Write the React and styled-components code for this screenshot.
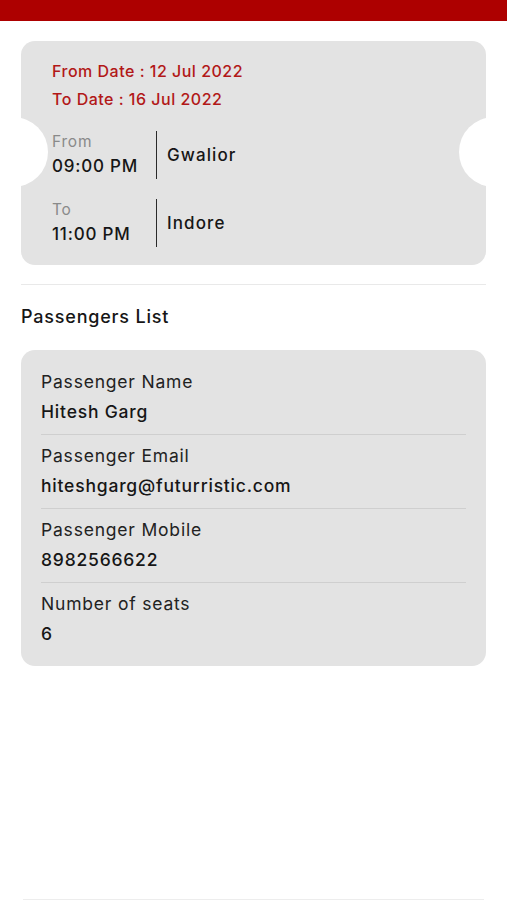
import React from 'react';
import styled, { createGlobalStyle } from 'styled-components';

const GlobalStyle = createGlobalStyle`
    * {
        box-sizing: border-box;
    }
    body {
        margin: 0;
        background: #fff;
        font-family: Inter, "Noto Sans", sans-serif;
        color: #161616;
        letter-spacing: 0.8px;
    }
`;

const trip = {
    fromDate: '12 Jul 2022',
    toDate: '16 Jul 2022',
    stops: [
        { label: 'From', time: '09:00 PM', city: 'Gwalior' },
        { label: 'To', time: '11:00 PM', city: 'Indore' },
    ],
};

const passenger = [
    { label: 'Passenger Name', value: 'Hitesh Garg' },
    { label: 'Passenger Email', value: 'hiteshgarg@futurristic.com' },
    { label: 'Passenger Mobile', value: '8982566622' },
    { label: 'Number of seats', value: '6' },
];

class App extends React.Component {
    render() {
        return (
            <Page>
                <GlobalStyle />
                <TopBar />
                <Main>
                    <Ticket>
                        <DateLine>From Date : {trip.fromDate}</DateLine>
                        <DateLine>To Date : {trip.toDate}</DateLine>
                        <Stops>
                            {trip.stops.map((s) => (
                                <Stop key={s.label}>
                                    <TimeCol>
                                        <StopLabel>{s.label}</StopLabel>
                                        <StopTime>{s.time}</StopTime>
                                    </TimeCol>
                                    <City>{s.city}</City>
                                </Stop>
                            ))}
                        </Stops>
                    </Ticket>
                    <Divider />
                    <SectionTitle>Passengers List</SectionTitle>
                    <InfoCard>
                        {passenger.map((f) => (
                            <Field key={f.label}>
                                <FieldLabel>{f.label}</FieldLabel>
                                <FieldValue>{f.value}</FieldValue>
                            </Field>
                        ))}
                    </InfoCard>
                </Main>
                <BottomLine />
            </Page>
        );
    }
}

const Page = styled.div`
    display: flex;
    flex-direction: column;
    height: 900px;
`;

const TopBar = styled.div`
    height: 21px;
    background: #ad0000;
    flex-shrink: 0;
`;

const Main = styled.main`
    flex: 1;
    padding: 20px 21px 0;
`;

const Ticket = styled.section`
    position: relative;
    overflow: hidden;
    height: 224px;
    padding: 16px 31px 0;
    border-radius: 14px;
    background: #e3e3e3;
    &::before,
    &::after {
        content: '';
        position: absolute;
        top: 76px;
        width: 70px;
        height: 70px;
        border-radius: 50%;
        background: #fff;
    }
    &::before {
        left: -43px;
    }
    &::after {
        right: -43px;
    }
`;

const DateLine = styled.div`
    font-size: 16px;
    line-height: 28px;
    font-weight: 500;
    letter-spacing: 0.5px;
    color: #b21818;
`;

const Stops = styled.div`
    display: flex;
    flex-direction: column;
    gap: 20px;
    margin-top: 18px;
`;

const Stop = styled.div`
    display: flex;
    align-items: center;
    height: 48px;
`;

const TimeCol = styled.div`
    width: 105px;
    height: 100%;
    border-right: 1.5px solid #2a2a2a;
    display: flex;
    flex-direction: column;
    justify-content: center;
`;

const StopLabel = styled.span`
    font-size: 15.5px;
    line-height: 22px;
    color: #8a8a8a;
`;

const StopTime = styled.span`
    font-size: 17px;
    line-height: 26px;
    font-weight: 500;
`;

const City = styled.span`
    padding-left: 10px;
    font-size: 17px;
    font-weight: 500;
    letter-spacing: 1.1px;
`;

const Divider = styled.hr`
    margin: 19px 0 0;
    border: 0;
    height: 1px;
    background: #e9e9e9;
`;

const SectionTitle = styled.h2`
    margin: 20px 0 0;
    font-size: 18px;
    line-height: 24px;
    font-weight: 500;
`;

const InfoCard = styled.section`
    margin-top: 21px;
    padding: 11px 20px 10px;
    border-radius: 14px;
    background: #e3e3e3;
`;

const Field = styled.div`
    padding: 6px 0 7px;
    & + & {
        border-top: 1px solid #cfcfcf;
    }
`;

const FieldLabel = styled.div`
    font-size: 17.5px;
    line-height: 30px;
    color: #222;
`;

const FieldValue = styled.div`
    font-size: 17.5px;
    line-height: 30px;
    font-weight: 500;
`;

const BottomLine = styled.div`
    height: 1px;
    margin: 0 23px;
    background: #ededed;
    flex-shrink: 0;
`;

export default App;
